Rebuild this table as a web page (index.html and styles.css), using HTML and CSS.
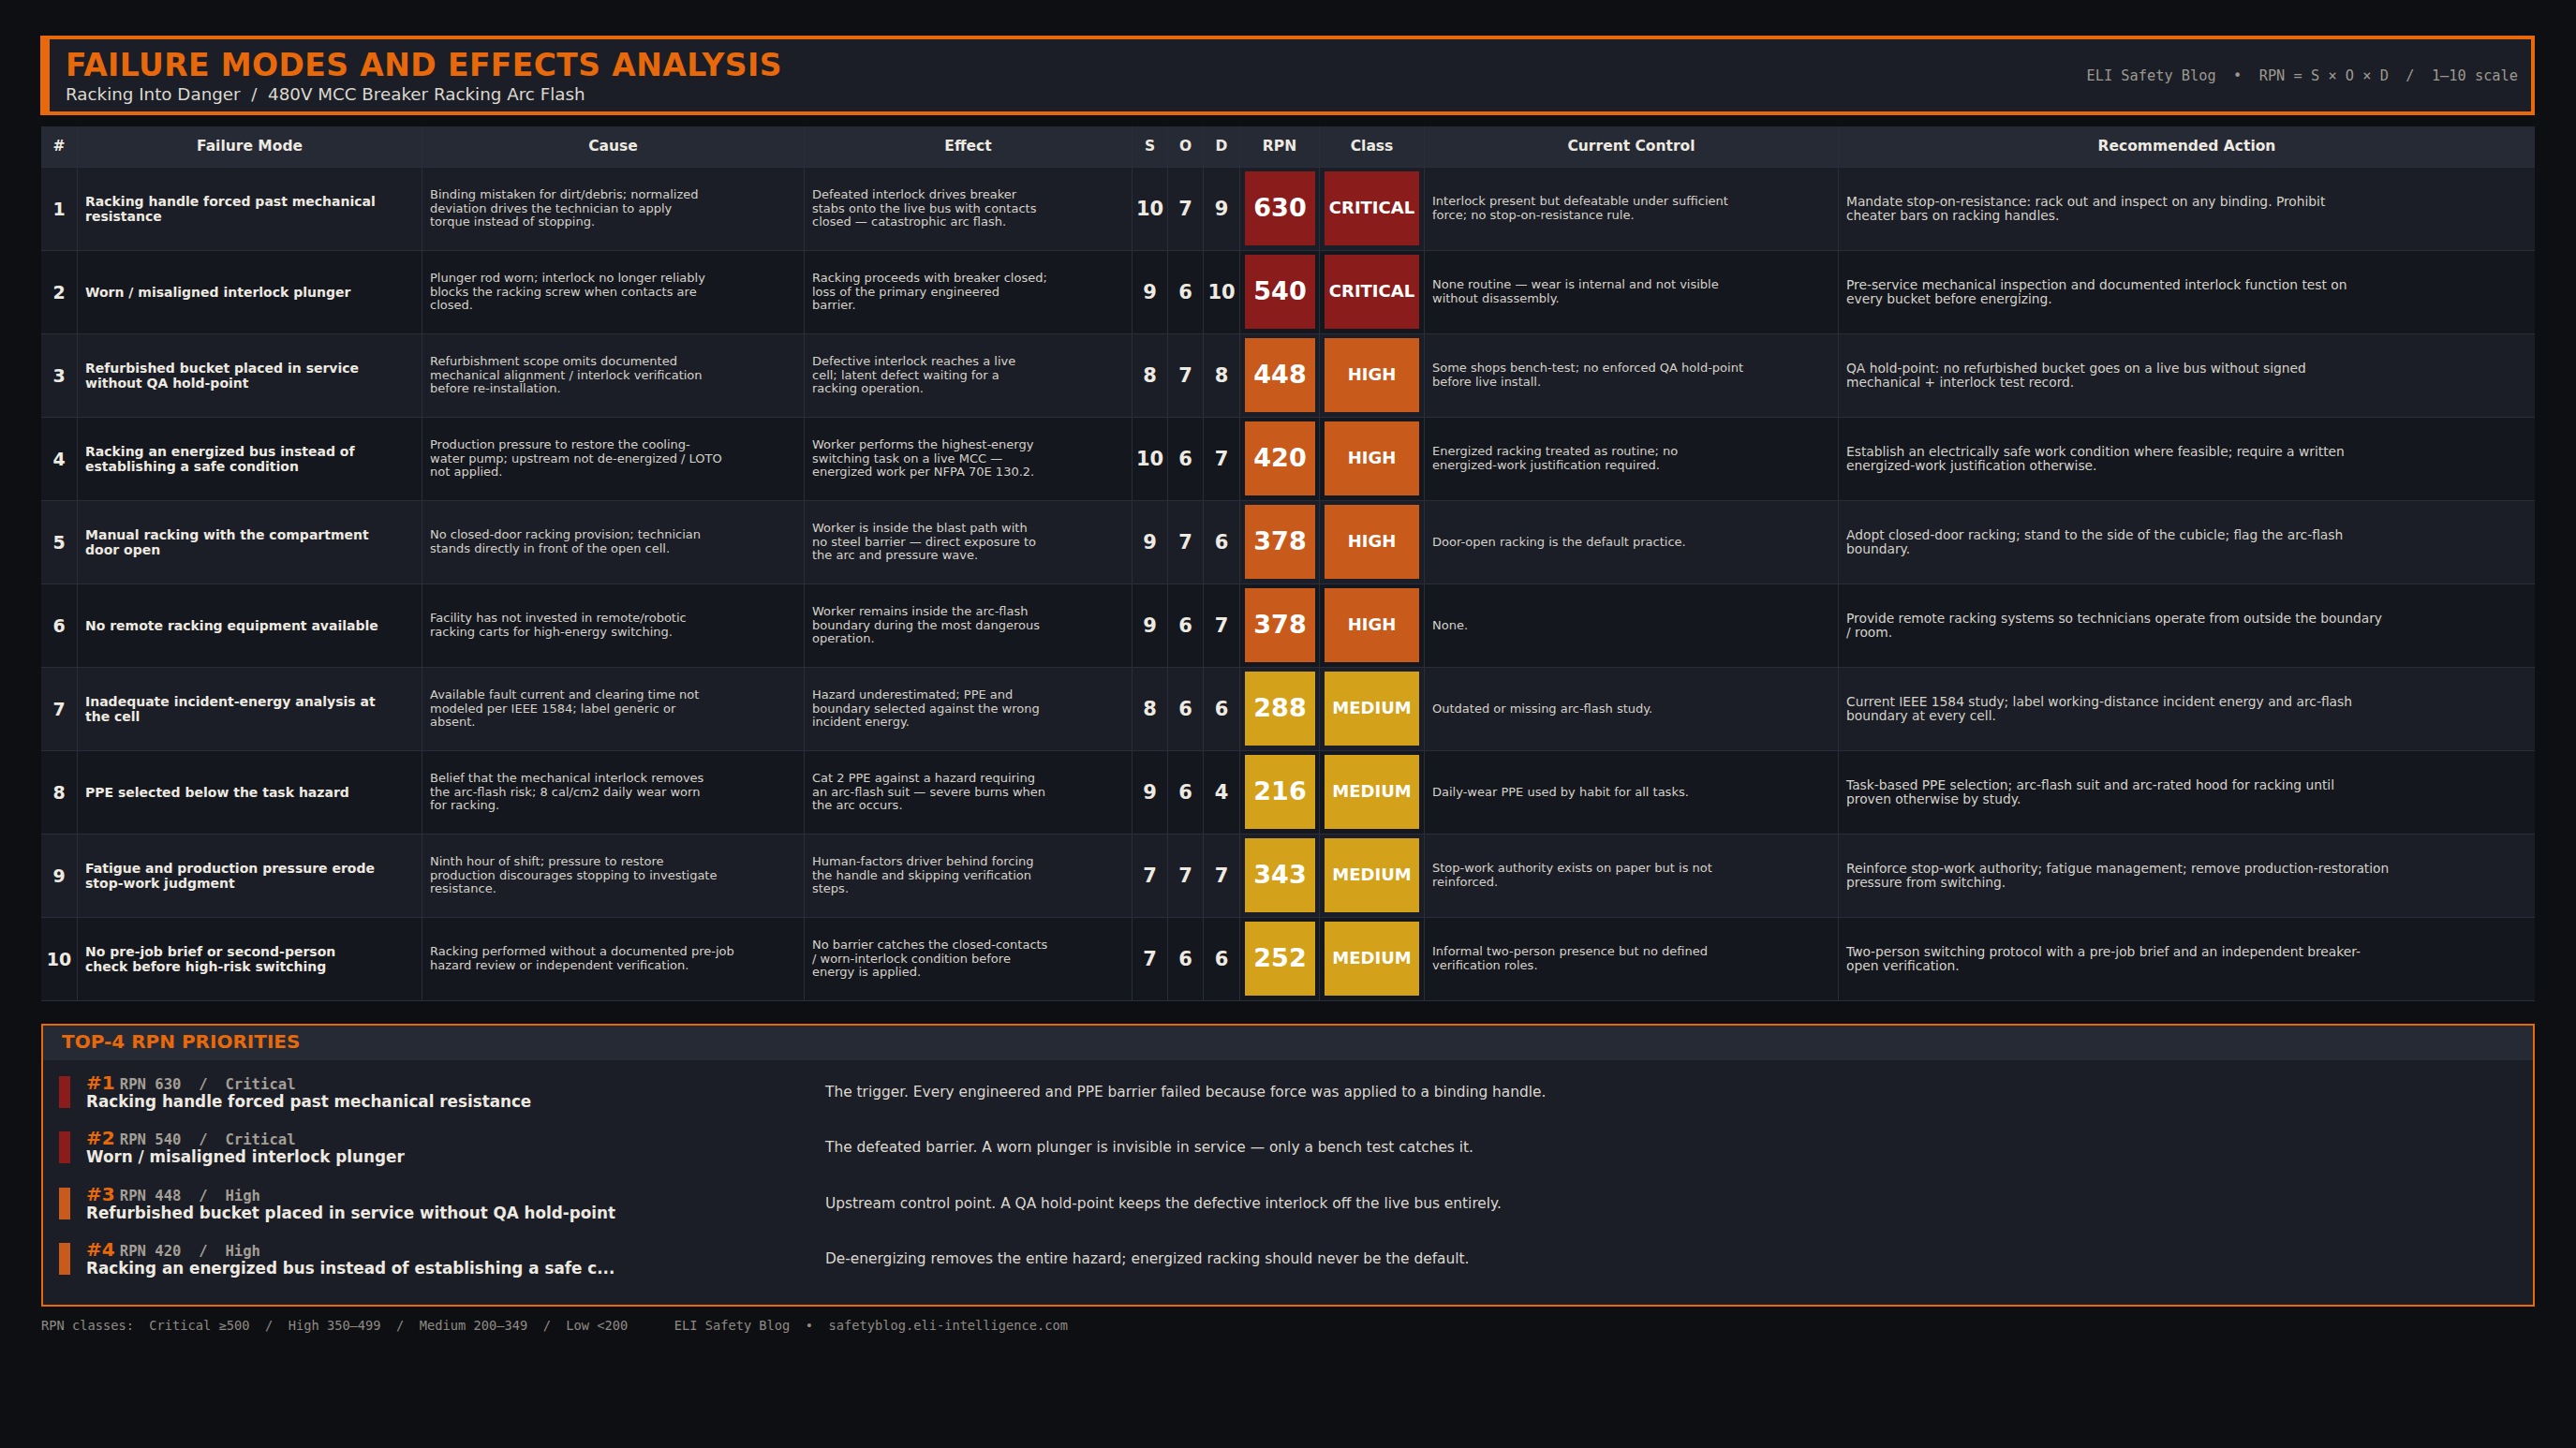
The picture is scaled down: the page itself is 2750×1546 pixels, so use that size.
FILE: index.html
```html
<!DOCTYPE html>
<html lang="en">
<head>
<meta charset="utf-8">
<title>FMEA – Racking Into Danger</title>
<link rel="stylesheet" href="styles.css">
</head>
<body>
<div class="page">
  <header class="hero">
    <div class="hero-text">
      <h1 class="title">FAILURE MODES AND EFFECTS ANALYSIS</h1>
      <div class="subtitle">Racking Into Danger  /  480V MCC Breaker Racking Arc Flash</div>
    </div>
    <div class="hero-meta">ELI Safety Blog  •  RPN = S × O × D  /  1–10 scale</div>
  </header>

  <div class="fmea">
    <div class="row head">
      <div class="cell c">#</div>
      <div class="cell c">Failure Mode</div>
      <div class="cell c">Cause</div>
      <div class="cell c">Effect</div>
      <div class="cell c">S</div>
      <div class="cell c">O</div>
      <div class="cell c">D</div>
      <div class="cell c">RPN</div>
      <div class="cell c">Class</div>
      <div class="cell c">Current Control</div>
      <div class="cell c">Recommended Action</div>
    </div>

    <div class="row">
      <div class="cell num">1</div>
      <div class="cell mode">Racking handle forced past mechanical<br>resistance</div>
      <div class="cell txt">Binding mistaken for dirt/debris; normalized<br>deviation drives the technician to apply<br>torque instead of stopping.</div>
      <div class="cell txt">Defeated interlock drives breaker<br>stabs onto the live bus with contacts<br>closed — catastrophic arc flash.</div>
      <div class="cell score">10</div>
      <div class="cell score">7</div>
      <div class="cell score">9</div>
      <div class="cell badge-cell"><div class="badge rpn critical">630</div></div>
      <div class="cell badge-cell"><div class="badge cls critical">CRITICAL</div></div>
      <div class="cell txt">Interlock present but defeatable under sufficient<br>force; no stop-on-resistance rule.</div>
      <div class="cell txt action">Mandate stop-on-resistance: rack out and inspect on any binding. Prohibit<br>cheater bars on racking handles.</div>
    </div>

    <div class="row">
      <div class="cell num">2</div>
      <div class="cell mode">Worn / misaligned interlock plunger</div>
      <div class="cell txt">Plunger rod worn; interlock no longer reliably<br>blocks the racking screw when contacts are<br>closed.</div>
      <div class="cell txt">Racking proceeds with breaker closed;<br>loss of the primary engineered<br>barrier.</div>
      <div class="cell score">9</div>
      <div class="cell score">6</div>
      <div class="cell score">10</div>
      <div class="cell badge-cell"><div class="badge rpn critical">540</div></div>
      <div class="cell badge-cell"><div class="badge cls critical">CRITICAL</div></div>
      <div class="cell txt">None routine — wear is internal and not visible<br>without disassembly.</div>
      <div class="cell txt action">Pre-service mechanical inspection and documented interlock function test on<br>every bucket before energizing.</div>
    </div>

    <div class="row">
      <div class="cell num">3</div>
      <div class="cell mode">Refurbished bucket placed in service<br>without QA hold-point</div>
      <div class="cell txt">Refurbishment scope omits documented<br>mechanical alignment / interlock verification<br>before re-installation.</div>
      <div class="cell txt">Defective interlock reaches a live<br>cell; latent defect waiting for a<br>racking operation.</div>
      <div class="cell score">8</div>
      <div class="cell score">7</div>
      <div class="cell score">8</div>
      <div class="cell badge-cell"><div class="badge rpn high">448</div></div>
      <div class="cell badge-cell"><div class="badge cls high">HIGH</div></div>
      <div class="cell txt">Some shops bench-test; no enforced QA hold-point<br>before live install.</div>
      <div class="cell txt action">QA hold-point: no refurbished bucket goes on a live bus without signed<br>mechanical + interlock test record.</div>
    </div>

    <div class="row">
      <div class="cell num">4</div>
      <div class="cell mode">Racking an energized bus instead of<br>establishing a safe condition</div>
      <div class="cell txt">Production pressure to restore the cooling-<br>water pump; upstream not de-energized / LOTO<br>not applied.</div>
      <div class="cell txt">Worker performs the highest-energy<br>switching task on a live MCC —<br>energized work per NFPA 70E 130.2.</div>
      <div class="cell score">10</div>
      <div class="cell score">6</div>
      <div class="cell score">7</div>
      <div class="cell badge-cell"><div class="badge rpn high">420</div></div>
      <div class="cell badge-cell"><div class="badge cls high">HIGH</div></div>
      <div class="cell txt">Energized racking treated as routine; no<br>energized-work justification required.</div>
      <div class="cell txt action">Establish an electrically safe work condition where feasible; require a written<br>energized-work justification otherwise.</div>
    </div>

    <div class="row">
      <div class="cell num">5</div>
      <div class="cell mode">Manual racking with the compartment<br>door open</div>
      <div class="cell txt">No closed-door racking provision; technician<br>stands directly in front of the open cell.</div>
      <div class="cell txt">Worker is inside the blast path with<br>no steel barrier — direct exposure to<br>the arc and pressure wave.</div>
      <div class="cell score">9</div>
      <div class="cell score">7</div>
      <div class="cell score">6</div>
      <div class="cell badge-cell"><div class="badge rpn high">378</div></div>
      <div class="cell badge-cell"><div class="badge cls high">HIGH</div></div>
      <div class="cell txt">Door-open racking is the default practice.</div>
      <div class="cell txt action">Adopt closed-door racking; stand to the side of the cubicle; flag the arc-flash<br>boundary.</div>
    </div>

    <div class="row">
      <div class="cell num">6</div>
      <div class="cell mode">No remote racking equipment available</div>
      <div class="cell txt">Facility has not invested in remote/robotic<br>racking carts for high-energy switching.</div>
      <div class="cell txt">Worker remains inside the arc-flash<br>boundary during the most dangerous<br>operation.</div>
      <div class="cell score">9</div>
      <div class="cell score">6</div>
      <div class="cell score">7</div>
      <div class="cell badge-cell"><div class="badge rpn high">378</div></div>
      <div class="cell badge-cell"><div class="badge cls high">HIGH</div></div>
      <div class="cell txt">None.</div>
      <div class="cell txt action">Provide remote racking systems so technicians operate from outside the boundary<br>/ room.</div>
    </div>

    <div class="row">
      <div class="cell num">7</div>
      <div class="cell mode">Inadequate incident-energy analysis at<br>the cell</div>
      <div class="cell txt">Available fault current and clearing time not<br>modeled per IEEE 1584; label generic or<br>absent.</div>
      <div class="cell txt">Hazard underestimated; PPE and<br>boundary selected against the wrong<br>incident energy.</div>
      <div class="cell score">8</div>
      <div class="cell score">6</div>
      <div class="cell score">6</div>
      <div class="cell badge-cell"><div class="badge rpn medium">288</div></div>
      <div class="cell badge-cell"><div class="badge cls medium">MEDIUM</div></div>
      <div class="cell txt">Outdated or missing arc-flash study.</div>
      <div class="cell txt action">Current IEEE 1584 study; label working-distance incident energy and arc-flash<br>boundary at every cell.</div>
    </div>

    <div class="row">
      <div class="cell num">8</div>
      <div class="cell mode">PPE selected below the task hazard</div>
      <div class="cell txt">Belief that the mechanical interlock removes<br>the arc-flash risk; 8 cal/cm2 daily wear worn<br>for racking.</div>
      <div class="cell txt">Cat 2 PPE against a hazard requiring<br>an arc-flash suit — severe burns when<br>the arc occurs.</div>
      <div class="cell score">9</div>
      <div class="cell score">6</div>
      <div class="cell score">4</div>
      <div class="cell badge-cell"><div class="badge rpn medium">216</div></div>
      <div class="cell badge-cell"><div class="badge cls medium">MEDIUM</div></div>
      <div class="cell txt">Daily-wear PPE used by habit for all tasks.</div>
      <div class="cell txt action">Task-based PPE selection; arc-flash suit and arc-rated hood for racking until<br>proven otherwise by study.</div>
    </div>

    <div class="row">
      <div class="cell num">9</div>
      <div class="cell mode">Fatigue and production pressure erode<br>stop-work judgment</div>
      <div class="cell txt">Ninth hour of shift; pressure to restore<br>production discourages stopping to investigate<br>resistance.</div>
      <div class="cell txt">Human-factors driver behind forcing<br>the handle and skipping verification<br>steps.</div>
      <div class="cell score">7</div>
      <div class="cell score">7</div>
      <div class="cell score">7</div>
      <div class="cell badge-cell"><div class="badge rpn medium">343</div></div>
      <div class="cell badge-cell"><div class="badge cls medium">MEDIUM</div></div>
      <div class="cell txt">Stop-work authority exists on paper but is not<br>reinforced.</div>
      <div class="cell txt action">Reinforce stop-work authority; fatigue management; remove production-restoration<br>pressure from switching.</div>
    </div>

    <div class="row">
      <div class="cell num">10</div>
      <div class="cell mode">No pre-job brief or second-person<br>check before high-risk switching</div>
      <div class="cell txt">Racking performed without a documented pre-job<br>hazard review or independent verification.</div>
      <div class="cell txt">No barrier catches the closed-contacts<br>/ worn-interlock condition before<br>energy is applied.</div>
      <div class="cell score">7</div>
      <div class="cell score">6</div>
      <div class="cell score">6</div>
      <div class="cell badge-cell"><div class="badge rpn medium">252</div></div>
      <div class="cell badge-cell"><div class="badge cls medium">MEDIUM</div></div>
      <div class="cell txt">Informal two-person presence but no defined<br>verification roles.</div>
      <div class="cell txt action">Two-person switching protocol with a pre-job brief and an independent breaker-<br>open verification.</div>
    </div>
  </div>

  <section class="priorities">
    <h2 class="pri-head">TOP-4 RPN PRIORITIES</h2>
    <div class="pri-list">
      <div class="pri-item">
        <span class="pri-bar critical"></span>
        <div class="pri-main">
          <div class="pri-line"><span class="pri-rank">#1</span> <span class="pri-meta">RPN 630  /  Critical</span></div>
          <div class="pri-title">Racking handle forced past mechanical resistance</div>
        </div>
        <div class="pri-desc">The trigger. Every engineered and PPE barrier failed because force was applied to a binding handle.</div>
      </div>
      <div class="pri-item">
        <span class="pri-bar critical"></span>
        <div class="pri-main">
          <div class="pri-line"><span class="pri-rank">#2</span> <span class="pri-meta">RPN 540  /  Critical</span></div>
          <div class="pri-title">Worn / misaligned interlock plunger</div>
        </div>
        <div class="pri-desc">The defeated barrier. A worn plunger is invisible in service — only a bench test catches it.</div>
      </div>
      <div class="pri-item">
        <span class="pri-bar high"></span>
        <div class="pri-main">
          <div class="pri-line"><span class="pri-rank">#3</span> <span class="pri-meta">RPN 448  /  High</span></div>
          <div class="pri-title">Refurbished bucket placed in service without QA hold-point</div>
        </div>
        <div class="pri-desc">Upstream control point. A QA hold-point keeps the defective interlock off the live bus entirely.</div>
      </div>
      <div class="pri-item">
        <span class="pri-bar high"></span>
        <div class="pri-main">
          <div class="pri-line"><span class="pri-rank">#4</span> <span class="pri-meta">RPN 420  /  High</span></div>
          <div class="pri-title">Racking an energized bus instead of establishing a safe c...</div>
        </div>
        <div class="pri-desc">De-energizing removes the entire hazard; energized racking should never be the default.</div>
      </div>
    </div>
  </section>

  <footer class="foot">RPN classes:  Critical ≥500  /  High 350–499  /  Medium 200–349  /  Low &lt;200      ELI Safety Blog  •  safetyblog.eli-intelligence.com</footer>
</div>
</body>
</html>
```

FILE: styles.css
```css
:root {
  --page: #0e0f13;
  --panel: #1b1e26;
  --panel-alt: #14171e;
  --head: #262a35;
  --line: #2a2e3a;
  --orange: #e8690b;
  --text: #d6d2ca;
  --strong: #eeeae2;
  --muted: #9d9990;
  --critical: #8b1c1c;
  --high: #c85b1b;
  --medium: #d4a11a;
}

* { box-sizing: border-box; }

html, body {
  margin: 0;
  padding: 0;
  background: var(--page);
}

body {
  font-family: "DejaVu Sans", "Liberation Sans", sans-serif;
  color: var(--text);
}

.page {
  width: 2662px;
  margin-left: 44px;
  padding-top: 38px;
}

/* ---------- header ---------- */
.hero {
  display: flex;
  align-items: center;
  justify-content: space-between;
  height: 85px;
  background: var(--panel);
  border: 4px solid var(--orange);
  border-left-width: 10px;
  padding: 0 14px 0 17px;
  margin-left: -1px;
}

.hero-text {
  padding-top: 3px;
}

.title {
  margin: 0;
  font-size: 33px;
  line-height: 32px;
  font-weight: bold;
  letter-spacing: 0.4px;
  color: var(--orange);
}

.subtitle {
  margin-top: 4px;
  font-size: 18.3px;
  line-height: 21px;
  color: #dcd8d0;
  white-space: pre;
}

.hero-meta {
  font-family: "DejaVu Sans Mono", "Liberation Mono", monospace;
  font-size: 15.3px;
  color: var(--muted);
  white-space: pre;
}

/* ---------- table ---------- */
.fmea {
  margin-top: 12px;
}

.row {
  display: grid;
  grid-template-columns: 39px 368px 408px 350px 38px 38px 39px 85px 112px 442px 743px;
  height: 89px;
  background: var(--panel);
}

.row:nth-child(odd) {
  background: var(--panel-alt);
}

.row.head {
  height: 44px;
  background: var(--head);
}

.cell {
  display: flex;
  align-items: center;
  border-right: 1px solid var(--line);
  border-bottom: 1px solid var(--line);
  padding: 0 8px;
  font-size: 13px;
  line-height: 14.6px;
}

.cell:last-child {
  border-right: none;
}

.head .cell {
  justify-content: center;
  font-size: 15.5px;
  font-weight: bold;
  color: var(--strong);
  padding: 0;
}

.num {
  justify-content: center;
  padding: 0;
  font-size: 19px;
  font-weight: bold;
  color: var(--strong);
}

.mode {
  font-size: 14px;
  line-height: 16px;
  font-weight: bold;
  color: var(--strong);
}

.txt {
  color: var(--text);
}

.txt.action {
  font-size: 13.8px;
  line-height: 15.5px;
}

.score {
  justify-content: center;
  padding: 0;
  font-size: 21px;
  font-weight: bold;
  color: var(--strong);
}

.badge-cell {
  padding: 4px 4px 5px 5px;
  align-items: stretch;
}

.badge-cell:nth-child(9) {
  padding: 4px 5px 5px 5px;
}

.badge {
  flex: 1;
  display: flex;
  align-items: center;
  justify-content: center;
  font-weight: bold;
  color: #ffffff;
}

.badge.rpn { font-size: 27px; }
.badge.cls { font-size: 18px; }

.critical { background: var(--critical); }
.high { background: var(--high); }
.medium { background: var(--medium); }

/* ---------- priorities ---------- */
.priorities {
  margin-top: 24px;
  border: 2px solid var(--orange);
  background: var(--panel);
  height: 302px;
}

.pri-head {
  margin: 0;
  height: 37px;
  background: var(--head);
  padding: 7px 0 0 20px;
  font-size: 20px;
  line-height: 20px;
  font-weight: bold;
  color: var(--orange);
}

.pri-list {
  display: flex;
  flex-direction: column;
  gap: 19.3px;
  padding: 14px 0 0 17px;
}

.pri-item {
  display: flex;
  align-items: center;
  height: 40px;
}

.pri-bar {
  width: 12px;
  height: 34px;
  margin-right: 17px;
  flex: none;
}

.pri-main {
  width: 789px;
  flex: none;
}

.pri-line {
  height: 20px;
  line-height: 20px;
  white-space: nowrap;
}

.pri-rank {
  font-size: 20px;
  font-weight: bold;
  color: var(--orange);
}

.pri-meta {
  font-family: "DejaVu Sans Mono", "Liberation Mono", monospace;
  font-size: 15.6px;
  font-weight: bold;
  color: #a39f96;
  white-space: pre;
}

.pri-title {
  font-size: 16.8px;
  line-height: 20px;
  font-weight: bold;
  color: var(--strong);
  white-space: nowrap;
}

.pri-desc {
  font-size: 15.4px;
  color: #dcd8d0;
}

/* ---------- footer ---------- */
.foot {
  margin-top: 12px;
  font-family: "DejaVu Sans Mono", "Liberation Mono", monospace;
  font-size: 13.7px;
  line-height: 16px;
  color: #8f8b83;
  white-space: pre;
}
```
